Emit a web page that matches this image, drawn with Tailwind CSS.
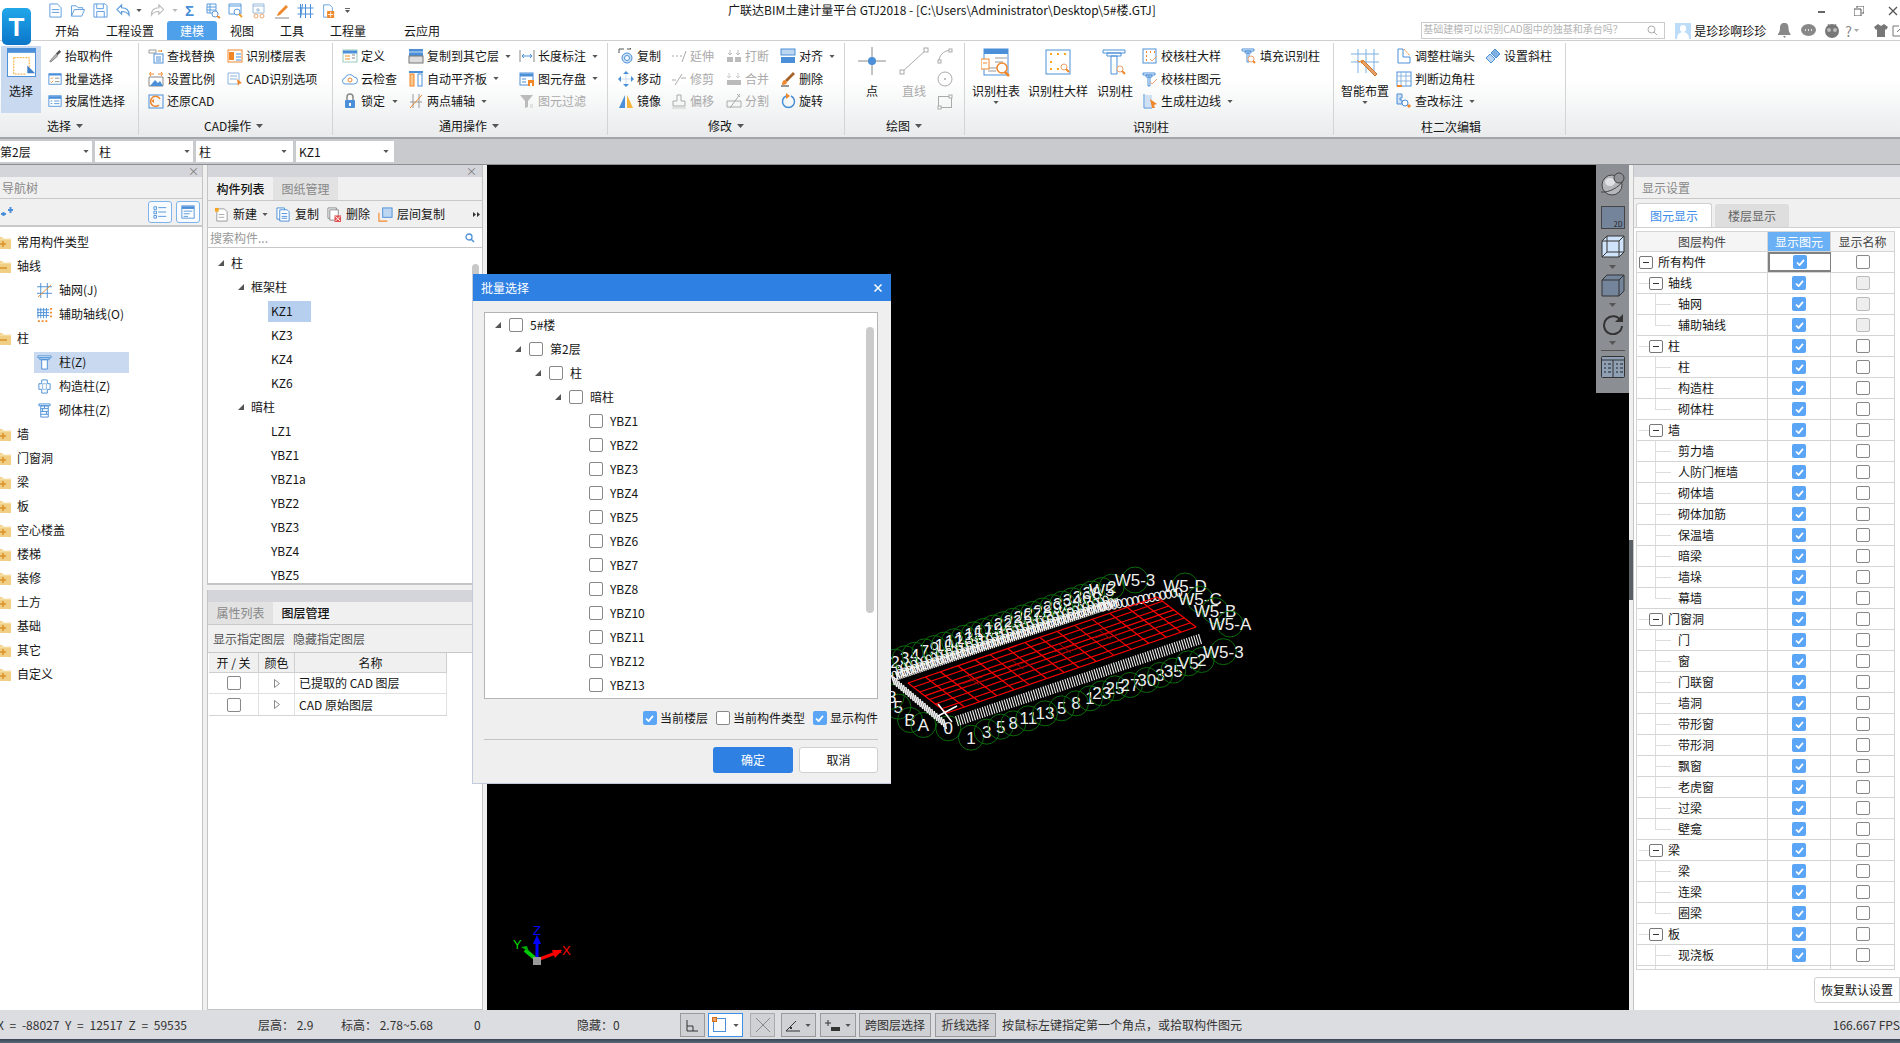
<!DOCTYPE html>
<html lang="zh-CN">
<head>
<meta charset="UTF-8">
<title>广联达BIM土建计量平台 GTJ2018</title>
<script src="https://cdn.jsdelivr.net/npm/@tailwindcss/browser@4"></script>
</head>
<body class="font-['Noto_Sans_CJK_SC','Noto_Sans',sans-serif] text-[12px] text-[#151515] overflow-hidden">

<!-- icon sprite -->
<svg class="hidden">
  <symbol id="caret" viewBox="0 0 7 4"><path d="M0 0h7L3.5 4z" fill="#555"/></symbol>
  <symbol id="tri" viewBox="0 0 6 6"><path d="M6 0v6H0z" fill="#555"/></symbol>
  <symbol id="check" viewBox="0 0 10 8"><path d="M1 4l3 3 5-6" fill="none" stroke="#fff" stroke-width="2"/></symbol>
  <symbol id="folder-plus" viewBox="0 0 16 16"><path d="M0 3h7l2 2h7v10H0z" fill="#f0cf85"/><path d="M0 5h16" stroke="#fae7b8"/><path d="M5 10h6M8 7v6" stroke="#d9932a" stroke-width="1.5"/></symbol>
  <symbol id="folder-minus" viewBox="0 0 16 16"><path d="M0 3h7l2 2h7v10H0z" fill="#f0cf85"/><path d="M0 5h16" stroke="#fae7b8"/><path d="M5 10h7" stroke="#d9932a" stroke-width="1.5"/></symbol>
  <!-- quick access -->
  <symbol id="q-new" viewBox="0 0 16 16"><path d="M2 1h8l4 4v10H2z" fill="#fff" stroke="#5a9bdc"/><path d="M4 7h8M4 10h8" stroke="#5a9bdc"/></symbol>
  <symbol id="q-open" viewBox="0 0 16 16"><path d="M1 14V3h5l2 2h5v2M1 14l3-7h11l-3 7z" fill="none" stroke="#5a9bdc"/></symbol>
  <symbol id="q-save" viewBox="0 0 16 16"><path d="M1 1h12l2 2v12H1z" fill="none" stroke="#5a9bdc"/><path d="M4 1v5h7V1M4 15V9h8v6" fill="none" stroke="#5a9bdc"/></symbol>
  <symbol id="q-undo" viewBox="0 0 16 16"><path d="M6 2L1 7l5 5V9c4 0 6 1 8 4 0-6-3-8-8-8z" fill="none" stroke="#5a9bdc" stroke-width="1.2"/></symbol>
  <symbol id="q-redo" viewBox="0 0 16 16"><path d="M10 2l5 5-5 5V9c-4 0-6 1-8 4 0-6 3-8 8-8z" fill="none" stroke="#bbb" stroke-width="1.2"/></symbol>
  <symbol id="q-doc1" viewBox="0 0 16 16"><path d="M2 1h9v9H2zM2 4h9M2 7h9M5 1v9" fill="none" stroke="#5a9bdc"/><circle cx="10" cy="11" r="3" fill="#fff" stroke="#5a9bdc"/><path d="M12 13l3 2" stroke="#f0872a" stroke-width="2"/></symbol>
  <symbol id="q-doc2" viewBox="0 0 16 16"><path d="M1 1h12v10H1zM1 3h12" fill="none" stroke="#5a9bdc"/><circle cx="9" cy="9" r="3" fill="#fff" stroke="#5a9bdc"/><path d="M11 11l3 3" stroke="#f0a02a" stroke-width="2"/></symbol>
  <symbol id="q-doc3" viewBox="0 0 16 16"><path d="M2 1h11v9H2zM2 3h11M7 5v4M5 7h4" fill="none" stroke="#9abbdc"/><circle cx="5" cy="13" r="2" fill="none" stroke="#f0a66a"/><circle cx="11" cy="13" r="2" fill="none" stroke="#f0a66a"/></symbol>
  <symbol id="q-pen" viewBox="0 0 16 16"><path d="M4 10l8-8 2 2-8 8-3 1z" fill="#f0872a"/><path d="M1 15h14" stroke="#888"/></symbol>
  <symbol id="q-grid" viewBox="0 0 16 16"><path d="M3 1v14M8 1v14M13 1v14M0 5h16M0 11h16M5 1L3 15" fill="none" stroke="#4a8fd8"/></symbol>
  <symbol id="q-add" viewBox="0 0 16 16"><path d="M3 1h7l3 3v5M3 1v14h4" fill="none" stroke="#5a9bdc"/><rect x="7" y="8" width="8" height="8" fill="#f0872a"/><path d="M11 9v6M8 12h6" stroke="#fff"/></symbol>
  <!-- ribbon small -->
  <symbol id="r-pick" viewBox="0 0 16 16"><path d="M2 14l7-8 2 2-8 7z" fill="#bbb" stroke="#777"/><path d="M9 5l4-4 2 2-4 4z" fill="#555"/></symbol>
  <symbol id="r-batch" viewBox="0 0 16 16"><rect x="1" y="2" width="14" height="12" fill="#fff" stroke="#4a8fd8"/><path d="M1 3h14" stroke="#4a8fd8" stroke-width="2"/><path d="M3 7l1 1 2-2M3 11l1 1 2-2" fill="none" stroke="#f0872a"/><path d="M8 7h5M8 11h5" stroke="#888"/></symbol>
  <symbol id="r-attr" viewBox="0 0 16 16"><rect x="1" y="2" width="14" height="12" fill="#fff" stroke="#4a8fd8"/><path d="M1 4h14" stroke="#4a8fd8" stroke-width="3"/><path d="M3 8h2M3 11h2M7 8h6M7 11h6" stroke="#4a8fd8"/></symbol>
  <symbol id="r-find" viewBox="0 0 16 16"><path d="M1 2h7v3H1z" fill="none" stroke="#999"/><path d="M10 3h4l-1-1M14 3l-1 1" fill="none" stroke="#f0872a"/><rect x="6" y="6" width="9" height="9" fill="none" stroke="#4a8fd8"/><path d="M8 9h5M8 11h5M8 13h5" stroke="#4a8fd8"/></symbol>
  <symbol id="r-floor" viewBox="0 0 16 16"><rect x="1" y="2" width="14" height="12" fill="#fff" stroke="#f0872a"/><rect x="2" y="4" width="5" height="8" fill="#f0872a"/><path d="M9 6h5M9 9h5M9 12h5" stroke="#4a8fd8"/></symbol>
  <symbol id="r-scale" viewBox="0 0 16 16"><path d="M1 6h14V15H1z" fill="#fff" stroke="#888"/><path d="M2 15l5-6 3 3 2-2 3 5z" fill="#4a8fd8"/><path d="M2 3h4M10 3h4M3 1L1.5 3 3 5M13 1l1.5 2L13 5" fill="none" stroke="#f0872a"/></symbol>
  <symbol id="r-cadopt" viewBox="0 0 16 16"><path d="M1 2h11v11H1z" fill="#fff" stroke="#8ab4dc"/><path d="M3 5h7M3 8h7" stroke="#8ab4dc"/><path d="M10 8l5 4-3 1-1 2z" fill="#f0872a"/></symbol>
  <symbol id="r-restore" viewBox="0 0 16 16"><rect x="1" y="2" width="14" height="13" fill="none" stroke="#4a8fd8"/><path d="M12 6a5 5 0 1 0-1 6" fill="none" stroke="#f0872a" stroke-width="1.5"/><path d="M3 8l3-2v4z" fill="#f0872a"/></symbol>
  <symbol id="r-def" viewBox="0 0 16 16"><rect x="1" y="2" width="14" height="12" fill="#fff" stroke="#9cb"/><path d="M1 4h14" stroke="#4a8fd8" stroke-width="3"/><path d="M3 7h5v2H3zM3 10h5v2H3z" fill="#f7c68b"/><path d="M10 7h3M10 10h3" stroke="#888"/></symbol>
  <symbol id="r-cloud" viewBox="0 0 16 16"><path d="M4 13a3 3 0 0 1-1-6 5 5 0 0 1 9-1 3.500 3.500 0 0 1 0 7z" fill="#fff" stroke="#5a9bdc"/><circle cx="8" cy="9" r="2" fill="none" stroke="#f0872a"/></symbol>
  <symbol id="r-lock" viewBox="0 0 16 16"><path d="M5 7V4a3 3 0 0 1 6 0v3" fill="none" stroke="#888" stroke-width="1.5"/><rect x="3" y="7" width="10" height="8" rx="1" fill="#4a8fd8"/><rect x="7" y="10" width="2" height="3" fill="#fff"/></symbol>
  <symbol id="r-cfloor" viewBox="0 0 16 16"><rect x="1" y="1" width="14" height="7" fill="#4a8fd8"/><rect x="1" y="8" width="14" height="7" fill="#ddd" stroke="#777"/><path d="M1 4h14" stroke="#cde"/></symbol>
  <symbol id="r-slab" viewBox="0 0 16 16"><path d="M1 1h14" stroke="#4a8fd8" stroke-width="2"/><rect x="2" y="3" width="4" height="12" fill="#f7c68b" stroke="#f0872a"/><rect x="10" y="3" width="4" height="12" fill="#fff" stroke="#4a8fd8"/></symbol>
  <symbol id="r-two" viewBox="0 0 16 16"><path d="M2 9h12M5 1v14M11 1v14" stroke="#999" fill="none"/><path d="M2 15L14 2" stroke="#f0872a"/></symbol>
  <symbol id="r-len" viewBox="0 0 16 16"><path d="M1 2v12M15 2v12" stroke="#888"/><path d="M3 8h10M5 6L3 8l2 2M11 6l2 2-2 2" fill="none" stroke="#4a8fd8"/></symbol>
  <symbol id="r-store" viewBox="0 0 16 16"><rect x="1" y="2" width="13" height="12" fill="#fff" stroke="#4a8fd8"/><path d="M1 4h13" stroke="#4a8fd8" stroke-width="3"/><path d="M3 8h4M3 11h4" stroke="#4a8fd8"/><rect x="9" y="9" width="6" height="6" fill="#f0872a"/><rect x="11" y="12" width="2" height="3" fill="#fff"/></symbol>
  <symbol id="r-filter" viewBox="0 0 16 16"><path d="M1 2h13L9 8v6l-3 1V8z" fill="#bbb"/><path d="M11 12h3M11 14h3" stroke="#ccc"/></symbol>
  <symbol id="r-copy" viewBox="0 0 16 16"><path d="M1 5V1h5" fill="none" stroke="#555"/><path d="M9 1h4l-1-1" fill="none" stroke="#555"/><circle cx="9" cy="10" r="5" fill="#cde3f7" stroke="#4a8fd8"/><circle cx="9" cy="10" r="2.500" fill="#fff" stroke="#4a8fd8"/></symbol>
  <symbol id="r-move" viewBox="0 0 16 16"><path d="M8 1v14M1 8h14" stroke="#cde" /><path d="M8 0l3 3H5zM8 16l-3-3h6zM0 8l3-3v6zM16 8l-3 3V5z" fill="#4a8fd8"/></symbol>
  <symbol id="r-mirror" viewBox="0 0 16 16"><path d="M7 2v13H1z" fill="#4a8fd8"/><path d="M9 2v13h6z" fill="#f5b53c"/></symbol>
  <symbol id="r-ext" viewBox="0 0 16 16"><path d="M1 8h2M5 8h2M9 8h2" stroke="#aaa"/><path d="M11 14L15 3" stroke="#aaa"/></symbol>
  <symbol id="r-trim" viewBox="0 0 16 16"><path d="M1 9h4M10 7h5M4 14L11 3" stroke="#aaa" fill="none"/></symbol>
  <symbol id="r-offset" viewBox="0 0 16 16"><path d="M6 2h4v6h4v5H2V8h4z" fill="none" stroke="#aaa"/><path d="M1 15h14" stroke="#ccc"/></symbol>
  <symbol id="r-break" viewBox="0 0 16 16"><path d="M1 9h6v5H1zM9 9h6v5H9z" fill="#bbb"/><path d="M4 2v5M2 5l2 2 2-2M12 2v5M10 5l2 2 2-2" fill="none" stroke="#bbb"/></symbol>
  <symbol id="r-merge" viewBox="0 0 16 16"><path d="M1 9h14v5H1z" fill="#bbb"/><path d="M3 2v5M12 2v5M1 5l2 2 2-2M10 5l2 2 2-2" fill="none" stroke="#ccc"/></symbol>
  <symbol id="r-split" viewBox="0 0 16 16"><path d="M1 8h14v6H1z" fill="none" stroke="#aaa"/><path d="M4 15L14 1M11 1l3 3" stroke="#aaa" fill="none"/></symbol>
  <symbol id="r-align" viewBox="0 0 16 16"><rect x="1" y="1" width="14" height="6" fill="#bcd6f2" stroke="#4a8fd8"/><rect x="1" y="9" width="14" height="6" fill="#4a8fd8"/></symbol>
  <symbol id="r-del" viewBox="0 0 16 16"><path d="M5 9l8-8 2 2-8 8z" fill="#a5622a"/><path d="M2 14c0-3 1-5 3-5l2 2c0 2-2 3-5 3z" fill="#f0872a"/><path d="M1 15h8" stroke="#333"/></symbol>
  <symbol id="r-rot" viewBox="0 0 16 16"><path d="M11 3a6 6 0 1 1-5 0" fill="none" stroke="#4a8fd8" stroke-width="1.5"/><path d="M6 0l4 3-4 3z" fill="#f0872a"/></symbol>
  <symbol id="r-chk1" viewBox="0 0 16 16"><rect x="1" y="1" width="13" height="14" fill="#fff" stroke="#4a8fd8"/><path d="M4 4h1M8 4h1M12 4h1M4 8h1M4 12h1" stroke="#f0872a" stroke-width="2"/><path d="M8 11l2 2 5-5" fill="none" stroke="#f2a06a"/></symbol>
  <symbol id="r-chk2" viewBox="0 0 16 16"><path d="M1 2h12v2H1zM4 4h6v2H4zM6 6h2v9H6z" fill="none" stroke="#4a8fd8"/><path d="M8 11l2 2 5-5" fill="none" stroke="#f2a06a"/></symbol>
  <symbol id="r-edge" viewBox="0 0 16 16"><path d="M2 1v14M2 15h8" stroke="#4a8fd8"/><rect x="3" y="2" width="7" height="12" fill="#cfe0f5"/><path d="M8 6l7 5-3 1 1 3-3 0z" fill="#f0872a"/></symbol>
  <symbol id="r-fill" viewBox="0 0 16 16"><path d="M1 1h12v2H1zM4 3h6v2H4zM6 5h2v9H6z" fill="none" stroke="#4a8fd8"/><circle cx="10" cy="11" r="3" fill="#fff" stroke="#f2a06a"/><path d="M12 13l2 2" stroke="#f0872a" stroke-width="2"/></symbol>
  <symbol id="r-adj" viewBox="0 0 16 16"><path d="M2 1h5v8h7v6H2z" fill="none" stroke="#4a8fd8"/><path d="M8 1l6 7" stroke="#f0872a" stroke-dasharray="2 1"/></symbol>
  <symbol id="r-corner" viewBox="0 0 16 16"><rect x="1" y="1" width="14" height="14" fill="#fff" stroke="#4a8fd8"/><path d="M1 5h14M1 10h14M5 1v14M10 1v14" stroke="#8ab4dc"/><path d="M1 15h5" stroke="#f0872a" stroke-width="2"/></symbol>
  <symbol id="r-mark" viewBox="0 0 16 16"><path d="M1 1h5v4H4v2h2v4H1z" fill="#cfe0f5" stroke="#4a8fd8"/><circle cx="9" cy="10" r="3" fill="#fff" stroke="#4a8fd8"/><path d="M12 12l2 2" stroke="#f0872a" stroke-width="3"/></symbol>
  <symbol id="r-slant" viewBox="0 0 16 16"><path d="M1 10l5 5 4-4-5-5z" fill="#bcd6f2" stroke="#4a8fd8"/><path d="M6 5l4-4 5 5-4 4z" fill="#7fb0e2" stroke="#4a8fd8"/></symbol>
  <!-- ribbon large -->
  <symbol id="b-select" viewBox="0 0 30 30"><rect x="0.500" y="0.500" width="29" height="29" fill="#fff" stroke="#4a8fd8"/><rect x="0" y="0" width="30" height="5" fill="#4a8fd8"/><path d="M7 10h16v17" fill="none" stroke="#f5a623" stroke-dasharray="2 1"/><path d="M7 10v17h12" fill="none" stroke="#f5a623" stroke-dasharray="2 1"/><path d="M21 18l8 8h-8z" fill="#3f7fc8"/></symbol>
  <symbol id="b-point" viewBox="0 0 30 30"><path d="M15 1v28M1 15h28" stroke="#888"/><circle cx="15" cy="15" r="4" fill="#4a8fd8"/></symbol>
  <symbol id="b-line" viewBox="0 0 30 30"><path d="M3 26L27 4" stroke="#aaa"/><rect x="1" y="24" width="4" height="4" fill="#fff" stroke="#aaa"/><rect x="25" y="2" width="4" height="4" fill="#fff" stroke="#aaa"/></symbol>
  <symbol id="b-table" viewBox="0 0 30 30"><rect x="3" y="1" width="24" height="26" fill="#fff" stroke="#4a8fd8"/><rect x="3" y="1" width="24" height="5" fill="#4a8fd8"/><path d="M14 10h12M14 14h8M7 20h10M7 23h8" stroke="#999"/><rect x="0" y="11" width="8" height="10" fill="#fff" stroke="#f0872a"/><path d="M2 15h4" stroke="#f0872a"/><circle cx="21" cy="20" r="5" fill="#fff" stroke="#f0872a" stroke-width="1.500"/><path d="M24 24l4 4" stroke="#f0872a" stroke-width="2.500"/></symbol>
  <symbol id="b-detail" viewBox="0 0 30 30"><rect x="3" y="2" width="24" height="24" fill="#fff" stroke="#4a8fd8"/><path d="M7 6h2M14 6h2M21 6h2M7 14h2M7 21h2M14 21h2" stroke="#f5a623" stroke-width="2"/><circle cx="21" cy="19" r="3" fill="#fff" stroke="#f2a06a"/><path d="M23 21l3 3" stroke="#f0872a" stroke-width="2"/></symbol>
  <symbol id="b-col" viewBox="0 0 30 30"><path d="M3 2h22v3H3zM7 5h14v3H7zM11 8h6v18h-6z" fill="#fff" stroke="#4a8fd8"/><circle cx="20" cy="21" r="3" fill="#fff" stroke="#f2a06a"/><path d="M22 23l3 3" stroke="#f0872a" stroke-width="2"/></symbol>
  <symbol id="b-smart" viewBox="0 0 30 30"><path d="M8 1v24M16 1v24M24 1v24M1 6h28M1 14h28" stroke="#7fb0e2"/><path d="M13 12l14 14-2 2L11 14z" fill="#e6a26a" stroke="#c9782e"/><path d="M7 12l2 2 4-2-1 4" fill="none" stroke="#f0872a"/></symbol>
  <symbol id="b-arc" viewBox="0 0 16 16"><path d="M2 14c0-7 4-11 12-12" fill="none" stroke="#aaa"/><rect x="1" y="12" width="3" height="3" fill="#fff" stroke="#aaa"/><rect x="12" y="1" width="3" height="3" fill="#fff" stroke="#aaa"/></symbol>
  <symbol id="b-circle" viewBox="0 0 16 16"><circle cx="8" cy="8" r="7" fill="none" stroke="#aaa"/><circle cx="8" cy="8" r="1" fill="#aaa"/></symbol>
  <symbol id="b-rect" viewBox="0 0 16 16"><rect x="1.500" y="2.500" width="13" height="11" fill="none" stroke="#aaa"/><rect x="12" y="1" width="3" height="3" fill="#fff" stroke="#aaa"/><rect x="1" y="12" width="3" height="3" fill="#fff" stroke="#aaa"/></symbol>
  <!-- side panel -->
  <symbol id="n-grid" viewBox="0 0 16 16"><path d="M4 0v16M11 0v16M0 4h16M0 11h16" stroke="#4a8fd8"/><path d="M1 15L15 2" stroke="#f0872a"/></symbol>
  <symbol id="n-aux" viewBox="0 0 16 16"><path d="M1 1v11M4 1v11M7 1v11M10 1v11M0 3h13M0 6h13M0 9h13" stroke="#4a8fd8"/><path d="M14 2h2M14 6h2M14 10h2M2 14v2M6 14v2M10 14v2" stroke="#f0872a" stroke-width="2"/></symbol>
  <symbol id="n-col" viewBox="0 0 16 16"><path d="M1 1h14v2H1zM3 3h10v2H3zM5 5h6v10H5z" fill="#fff" stroke="#4a8fd8"/></symbol>
  <symbol id="n-gz" viewBox="0 0 16 16"><path d="M5 1h6v4h3v6h-3v4H5v-4H2V5h3z" fill="#fff" stroke="#4a8fd8"/><path d="M6 5h4v6H6z" fill="none" stroke="#8ab4dc"/></symbol>
  <symbol id="n-mas" viewBox="0 0 16 16"><path d="M2 1h12v2H2zM4 3h8v12H4z" fill="#fff" stroke="#4a8fd8"/><path d="M4 6h8M4 9h8M4 12h8M8 3v3M6 6v3M10 9v3" stroke="#4a8fd8"/></symbol>
  <symbol id="p-new" viewBox="0 0 16 16"><path d="M3 2h8l3 3v10H3z" fill="#fff" stroke="#999"/><path d="M1 1h4v4H1z" fill="#f5a623"/><path d="M5 8h6M5 11h6" stroke="#aaa"/></symbol>
  <symbol id="p-copy" viewBox="0 0 16 16"><path d="M1 1h8v12H1z" fill="#fff" stroke="#4a8fd8"/><path d="M4 3h8l2 2v10H4z" fill="#fff" stroke="#4a8fd8"/><path d="M6 7h6M6 10h6M6 12h6" stroke="#4a8fd8"/></symbol>
  <symbol id="p-del" viewBox="0 0 16 16"><path d="M1 1h9v11H1z" fill="#fff" stroke="#888"/><path d="M3 3h9v11H3z" fill="#fff" stroke="#888"/><rect x="8" y="9" width="7" height="7" fill="#e05050"/><path d="M9 10l5 5M14 10l-5 5" stroke="#fff"/></symbol>
  <symbol id="p-fcopy" viewBox="0 0 16 16"><path d="M1 6v9h9" fill="none" stroke="#f0872a" stroke-width="1.200"/><rect x="5" y="1" width="10" height="10" fill="#bcd6f2" stroke="#4a8fd8"/></symbol>
  <symbol id="p-list" viewBox="0 0 16 16"><path d="M1 2h3v3H1zM1 7h3v3H1zM1 12h3v3H1z" fill="none" stroke="#4a8fd8"/><path d="M6 3h9M6 8h9M6 13h9" stroke="#4a8fd8"/></symbol>
  <symbol id="p-win" viewBox="0 0 16 16"><rect x="1" y="1" width="14" height="14" fill="#fff" stroke="#4a8fd8"/><path d="M1 3h14" stroke="#4a8fd8" stroke-width="3"/><path d="M3 7h10M3 10h7M3 13h5" stroke="#4a8fd8"/></symbol>
</svg>

<div class="relative w-[1900px] h-[1043px] bg-[#f0f0f0] flex flex-col overflow-hidden">

  <!-- logo lies over title bar and ribbon -->
  <div class="absolute left-[2px] top-[8px] w-[29px] h-[37px] rounded-[5px] bg-gradient-to-b from-[#21a7ea] to-[#0b76c9] flex items-center justify-center text-white text-[26px] font-bold leading-none z-10 font-['Liberation_Sans',sans-serif]">T</div>

  <!-- title bar -->
  <header class="h-[41px] bg-white border-b border-[#cfcfcf] shrink-0 flex flex-col">
    <div class="relative h-[21px] flex items-center pl-[48px]">
      <div class="flex items-center gap-[7px]">
        <svg class="w-[15px] h-[15px]"><use href="#q-new"/></svg>
        <svg class="w-[16px] h-[15px]"><use href="#q-open"/></svg>
        <svg class="w-[15px] h-[15px]"><use href="#q-save"/></svg>
        <svg class="w-[17px] h-[15px]"><use href="#q-undo"/></svg>
        <svg class="w-[6px] h-[3px] -ml-[3px]"><use href="#caret"/></svg>
        <svg class="w-[16px] h-[15px]"><use href="#q-redo"/></svg>
        <svg class="w-[6px] h-[3px] opacity-40"><use href="#caret"/></svg>
        <span class="text-[#4a8fd8] text-[15px] font-bold leading-none w-[12px] font-['Liberation_Sans',sans-serif]">Σ</span>
        <svg class="w-[16px] h-[16px] ml-[1px]"><use href="#q-doc1"/></svg>
        <svg class="w-[16px] h-[16px]"><use href="#q-doc2"/></svg>
        <svg class="w-[16px] h-[16px]"><use href="#q-doc3"/></svg>
        <svg class="w-[16px] h-[16px]"><use href="#q-pen"/></svg>
        <svg class="w-[17px] h-[16px]"><use href="#q-grid"/></svg>
        <svg class="w-[14px] h-[16px]"><use href="#q-add"/></svg>
        <span class="w-[5px] ml-[3px] flex flex-col gap-[1px] items-center"><span class="w-[5px] h-[1px] bg-[#666]"></span><svg class="w-[5px] h-[3px]"><use href="#caret"/></svg></span>
      </div>
      <div class="absolute left-[728px] top-[2px] leading-[16px] text-[12px]">广联达BIM土建计量平台 GTJ2018 - [C:\Users\Administrator\Desktop\5#楼.GTJ]</div>
      <div class="ml-auto flex items-center text-[#555]">
        <span class="w-[7px] h-[2px] bg-[#666] mr-[29px] mt-[3px]"></span>
        <svg class="w-[10px] h-[10px] mr-[24px]" viewBox="0 0 10 10"><path d="M3 2V0h7v7H8M0 3h7v7H0z" fill="none" stroke="#555"/></svg>
        <svg class="w-[10px] h-[10px] mr-[2px]" viewBox="0 0 10 10"><path d="M1 1l8 8M9 1l-8 8" stroke="#555" stroke-width="1.300"/></svg>
      </div>
    </div>
    <div class="h-[19px] flex items-stretch text-[12px]">
      <nav class="flex items-center pl-[55px]">
        <span>开始</span>
        <span class="ml-[27px]">工程设置</span>
        <span class="ml-[13px] w-[50px] h-[19px] bg-[#4fa0ea] text-white rounded-t-[3px] flex items-center justify-center">建模</span>
        <span class="ml-[13px]">视图</span>
        <span class="ml-[26px]">工具</span>
        <span class="ml-[26px]">工程量</span>
        <span class="ml-[38px]">云应用</span>
      </nav>
      <div class="ml-auto flex items-center mr-[4px]">
        <div class="w-[244px] h-[17px] border border-[#ccc] flex items-start pl-[1px] text-[10px] leading-[11px] text-[#b5b5b5] overflow-hidden whitespace-nowrap"><span class="w-[224px] shrink-0">基础建模可以识别CAD图中的独基和承台吗？</span>
          <svg class="w-[11px] h-[11px] mt-[2px] shrink-0" viewBox="0 0 11 11"><circle cx="4.500" cy="4.500" r="3.500" fill="none" stroke="#aaa"/><path d="M7 7l3 3" stroke="#aaa"/></svg>
        </div>
        <div class="w-[16px] h-[16px] ml-[10px] bg-[#bcdcf8] relative overflow-hidden"><span class="absolute left-[5px] top-[2px] w-[6px] h-[7px] rounded-full bg-white"></span><span class="absolute left-[2px] top-[9px] w-[12px] h-[8px] rounded-t-full bg-white"></span></div>
        <span class="ml-[3px] w-[72px]">是珍珍啊珍珍</span>
        <svg class="w-[13px] h-[15px] ml-[12px]" viewBox="0 0 13 15"><path d="M6.500 0c3 0 4 2 4 5s1 5 2 6v1H0v-1c1-1 2-3 2-6s1-5 4.500-5zM5 13h3l-1.500 2z" fill="#888"/></svg>
        <svg class="w-[15px] h-[13px] ml-[10px]" viewBox="0 0 15 13"><ellipse cx="7.500" cy="6" rx="7.500" ry="6" fill="#888"/><path d="M4 6h1M7 6h1M10 6h1" stroke="#fff" stroke-width="1.500"/></svg>
        <svg class="w-[16px] h-[15px] ml-[8px]" viewBox="0 0 16 15"><circle cx="8" cy="8" r="7" fill="#777"/><circle cx="5" cy="7" r="2" fill="#bbb"/><circle cx="11" cy="7" r="2" fill="#bbb"/><path d="M4 1l1 2M12 1l-1 2" stroke="#777"/></svg>
        <span class="ml-[5px] text-[#888] text-[14px] leading-none">?</span>
        <svg class="w-[5px] h-[3px] ml-[2px] opacity-50"><use href="#caret"/></svg>
        <svg class="w-[14px] h-[13px] ml-[15px]" viewBox="0 0 14 13"><path d="M4 0L0 3l2 3 1-1v8h8V5l1 1 2-3-4-3-3 2z" fill="#777"/></svg>
        <svg class="w-[12px] h-[12px] ml-[4px] -mr-[8px]" viewBox="0 0 12 12"><path d="M11 5v6H1V1h6M5 7l6-6" fill="none" stroke="#777"/></svg>
      </div>
    </div>
  </header>

  <!-- ribbon -->
  <div class="h-[98px] shrink-0 flex bg-gradient-to-b from-white from-40% to-[#e9ebec] border-b-2 border-[#a3a5a8]">
    <section class="w-[139px] my-[2px] border-r border-[#d2d4d6] flex flex-col">
      <div class="h-[74px] flex pt-[2px]">
        <div class="ml-[1px] w-[40px] h-[67px] mt-[1px] bg-[#c9daf0] flex flex-col items-center pt-[2px] gap-[2px]"><svg class="w-[29px] h-[29px]"><use href="#b-select"/></svg><span class="mt-[3px]">选择</span></div>
        <div class="ml-[7px] flex flex-col">
          <div class="h-[22.500px] flex items-center gap-[3px]"><svg class="w-[14px] h-[14px]"><use href="#r-pick"/></svg>抬取构件</div>
          <div class="h-[22.500px] flex items-center gap-[3px]"><svg class="w-[14px] h-[14px]"><use href="#r-batch"/></svg>批量选择</div>
          <div class="h-[22.500px] flex items-center gap-[3px]"><svg class="w-[14px] h-[14px]"><use href="#r-attr"/></svg>按属性选择</div>
        </div>
      </div>
      <div class="h-[17px] flex items-center pl-[47px]">选择<svg class="w-[7px] h-[4px] ml-[5px]"><use href="#caret"/></svg></div>
    </section>
    <section class="w-[194px] my-[2px] border-r border-[#d2d4d6] flex flex-col">
      <div class="h-[74px] flex pt-[2px] pl-[9px]">
        <div class="w-[79px] flex flex-col">
          <div class="h-[22.500px] flex items-center gap-[3px]"><svg class="w-4 h-4"><use href="#r-find"/></svg>查找替换</div>
          <div class="h-[22.500px] flex items-center gap-[3px]"><svg class="w-4 h-4"><use href="#r-scale"/></svg>设置比例</div>
          <div class="h-[22.500px] flex items-center gap-[3px]"><svg class="w-4 h-4"><use href="#r-restore"/></svg>还原CAD</div>
        </div>
        <div class="flex flex-col">
          <div class="h-[22.500px] flex items-center gap-[3px]"><svg class="w-4 h-4"><use href="#r-floor"/></svg>识别楼层表</div>
          <div class="h-[22.500px] flex items-center gap-[3px]"><svg class="w-4 h-4"><use href="#r-cadopt"/></svg>CAD识别选项</div>
        </div>
      </div>
      <div class="h-[17px] flex items-center pl-[65px]">CAD操作<svg class="w-[7px] h-[4px] ml-[5px]"><use href="#caret"/></svg></div>
    </section>
    <section class="w-[275px] my-[2px] border-r border-[#d2d4d6] flex flex-col">
      <div class="h-[74px] flex pt-[2px] pl-[9px]">
        <div class="w-[66px] flex flex-col">
          <div class="h-[22.500px] flex items-center gap-[3px]"><svg class="w-4 h-4"><use href="#r-def"/></svg>定义</div>
          <div class="h-[22.500px] flex items-center gap-[3px]"><svg class="w-4 h-4"><use href="#r-cloud"/></svg>云检查</div>
          <div class="h-[22.500px] flex items-center gap-[3px]"><svg class="w-4 h-4"><use href="#r-lock"/></svg>锁定<svg class="w-[6px] h-[3px] ml-[4px]"><use href="#caret"/></svg></div>
        </div>
        <div class="w-[111px] flex flex-col">
          <div class="h-[22.500px] flex items-center gap-[3px]"><svg class="w-4 h-4"><use href="#r-cfloor"/></svg>复制到其它层<svg class="w-[6px] h-[3px] ml-[3px]"><use href="#caret"/></svg></div>
          <div class="h-[22.500px] flex items-center gap-[3px]"><svg class="w-4 h-4"><use href="#r-slab"/></svg>自动平齐板<svg class="w-[6px] h-[3px] ml-[3px]"><use href="#caret"/></svg></div>
          <div class="h-[22.500px] flex items-center gap-[3px]"><svg class="w-4 h-4"><use href="#r-two"/></svg>两点辅轴<svg class="w-[6px] h-[3px] ml-[3px]"><use href="#caret"/></svg></div>
        </div>
        <div class="flex flex-col">
          <div class="h-[22.500px] flex items-center gap-[3px]"><svg class="w-4 h-4"><use href="#r-len"/></svg>长度标注<svg class="w-[6px] h-[3px] ml-[3px]"><use href="#caret"/></svg></div>
          <div class="h-[22.500px] flex items-center gap-[3px]"><svg class="w-4 h-4"><use href="#r-store"/></svg>图元存盘<svg class="w-[6px] h-[3px] ml-[3px]"><use href="#caret"/></svg></div>
          <div class="h-[22.500px] flex items-center gap-[3px] text-[#aaa]"><svg class="w-4 h-4"><use href="#r-filter"/></svg>图元过滤</div>
        </div>
      </div>
      <div class="h-[17px] flex items-center pl-[106px]">通用操作<svg class="w-[7px] h-[4px] ml-[5px]"><use href="#caret"/></svg></div>
    </section>
    <section class="w-[237px] my-[2px] border-r border-[#d2d4d6] flex flex-col">
      <div class="h-[74px] flex pt-[2px] pl-[10px]">
        <div class="w-[53px] flex flex-col">
          <div class="h-[22.500px] flex items-center gap-[3px]"><svg class="w-4 h-4"><use href="#r-copy"/></svg>复制</div>
          <div class="h-[22.500px] flex items-center gap-[3px]"><svg class="w-4 h-4"><use href="#r-move"/></svg>移动</div>
          <div class="h-[22.500px] flex items-center gap-[3px]"><svg class="w-4 h-4"><use href="#r-mirror"/></svg>镜像</div>
        </div>
        <div class="w-[55px] flex flex-col text-[#aaa]">
          <div class="h-[22.500px] flex items-center gap-[3px]"><svg class="w-4 h-4"><use href="#r-ext"/></svg>延伸</div>
          <div class="h-[22.500px] flex items-center gap-[3px]"><svg class="w-4 h-4"><use href="#r-trim"/></svg>修剪</div>
          <div class="h-[22.500px] flex items-center gap-[3px]"><svg class="w-4 h-4"><use href="#r-offset"/></svg>偏移</div>
        </div>
        <div class="w-[54px] flex flex-col text-[#aaa]">
          <div class="h-[22.500px] flex items-center gap-[3px]"><svg class="w-4 h-4"><use href="#r-break"/></svg>打断</div>
          <div class="h-[22.500px] flex items-center gap-[3px]"><svg class="w-4 h-4"><use href="#r-merge"/></svg>合并</div>
          <div class="h-[22.500px] flex items-center gap-[3px]"><svg class="w-4 h-4"><use href="#r-split"/></svg>分割</div>
        </div>
        <div class="flex flex-col">
          <div class="h-[22.500px] flex items-center gap-[3px]"><svg class="w-4 h-4"><use href="#r-align"/></svg>对齐<svg class="w-[6px] h-[3px] ml-[3px]"><use href="#caret"/></svg></div>
          <div class="h-[22.500px] flex items-center gap-[3px]"><svg class="w-4 h-4"><use href="#r-del"/></svg>删除</div>
          <div class="h-[22.500px] flex items-center gap-[3px]"><svg class="w-4 h-4"><use href="#r-rot"/></svg>旋转</div>
        </div>
      </div>
      <div class="h-[17px] flex items-center pl-[100px]">修改<svg class="w-[7px] h-[4px] ml-[5px]"><use href="#caret"/></svg></div>
    </section>
    <section class="w-[120px] my-[2px] border-r border-[#d2d4d6] flex flex-col">
      <div class="h-[74px] flex pt-[3px] pl-[11px]">
        <div class="w-[32px] flex flex-col items-center"><svg class="w-[30px] h-[30px]"><use href="#b-point"/></svg><span class="mt-[6px]">点</span></div>
        <div class="ml-[11px] w-[30px] flex flex-col items-center text-[#aaa]"><svg class="w-[30px] h-[30px]"><use href="#b-line"/></svg><span class="mt-[6px]">直线</span></div>
        <div class="ml-[8px] flex flex-col gap-[7px] pt-[2px]"><svg class="w-4 h-4"><use href="#b-arc"/></svg><svg class="w-4 h-4"><use href="#b-circle"/></svg><svg class="w-4 h-4"><use href="#b-rect"/></svg></div>
      </div>
      <div class="h-[17px] flex items-center pl-[41px]">绘图<svg class="w-[7px] h-[4px] ml-[5px]"><use href="#caret"/></svg></div>
    </section>
    <section class="w-[369px] my-[2px] border-r border-[#d2d4d6] flex flex-col">
      <div class="h-[74px] flex pt-[5px] pl-[7px]">
        <div class="w-[48px] flex flex-col items-center"><svg class="w-[30px] h-[30px]"><use href="#b-table"/></svg><span class="mt-[4px]">识别柱表</span><svg class="w-[6px] h-[3px] mt-[1px]"><use href="#caret"/></svg></div>
        <div class="ml-[8px] w-[60px] flex flex-col items-center"><svg class="w-[30px] h-[30px]"><use href="#b-detail"/></svg><span class="mt-[4px]">识别柱大样</span></div>
        <div class="ml-[9px] w-[36px] flex flex-col items-center"><svg class="w-[30px] h-[30px]"><use href="#b-col"/></svg><span class="mt-[4px]">识别柱</span></div>
        <div class="ml-[9px] w-[99px] flex flex-col -mt-[3px]">
          <div class="h-[22.500px] flex items-center gap-[3px]"><svg class="w-4 h-4"><use href="#r-chk1"/></svg>校核柱大样</div>
          <div class="h-[22.500px] flex items-center gap-[3px]"><svg class="w-4 h-4"><use href="#r-chk2"/></svg>校核柱图元</div>
          <div class="h-[22.500px] flex items-center gap-[3px]"><svg class="w-4 h-4"><use href="#r-edge"/></svg>生成柱边线<svg class="w-[6px] h-[3px] ml-[3px]"><use href="#caret"/></svg></div>
        </div>
        <div class="flex flex-col -mt-[3px]">
          <div class="h-[22.500px] flex items-center gap-[3px]"><svg class="w-4 h-4"><use href="#r-fill"/></svg>填充识别柱</div>
        </div>
      </div>
      <div class="h-[17px] flex items-center pl-[168px] pt-[3px]">识别柱</div>
    </section>
    <section class="w-[232px] my-[2px] border-r border-[#d2d4d6] flex flex-col">
      <div class="h-[74px] flex pt-[5px] pl-[7px]">
        <div class="w-[48px] flex flex-col items-center"><svg class="w-[30px] h-[30px]"><use href="#b-smart"/></svg><span class="mt-[4px]">智能布置</span><svg class="w-[6px] h-[3px] mt-[1px]"><use href="#caret"/></svg></div>
        <div class="ml-[7px] w-[89px] flex flex-col -mt-[3px]">
          <div class="h-[22.500px] flex items-center gap-[3px]"><svg class="w-4 h-4"><use href="#r-adj"/></svg>调整柱端头</div>
          <div class="h-[22.500px] flex items-center gap-[3px]"><svg class="w-4 h-4"><use href="#r-corner"/></svg>判断边角柱</div>
          <div class="h-[22.500px] flex items-center gap-[3px]"><svg class="w-4 h-4"><use href="#r-mark"/></svg>查改标注<svg class="w-[6px] h-[3px] ml-[3px]"><use href="#caret"/></svg></div>
        </div>
        <div class="flex flex-col -mt-[3px]">
          <div class="h-[22.500px] flex items-center gap-[3px]"><svg class="w-4 h-4"><use href="#r-slant"/></svg>设置斜柱</div>
        </div>
      </div>
      <div class="h-[17px] flex items-center pl-[87px] pt-[3px]">柱二次编辑</div>
    </section>
  </div>

  <!-- property combos -->
  <div class="h-[26px] shrink-0 bg-[#c8cacd] flex items-center gap-[3px] border-b border-[#8d8f92]">
    <div class="w-[92px] h-[21px] bg-white flex items-center justify-between pr-[3px]">第2层<svg class="w-[6px] h-[3px]"><use href="#caret"/></svg></div>
    <div class="w-[98px] h-[21px] bg-white flex items-center justify-between pl-[4px] pr-[3px]">柱<svg class="w-[6px] h-[3px]"><use href="#caret"/></svg></div>
    <div class="w-[97px] h-[21px] bg-white flex items-center justify-between pl-[3px] pr-[6px]">柱<svg class="w-[6px] h-[3px]"><use href="#caret"/></svg></div>
    <div class="w-[98px] h-[21px] bg-white flex items-center justify-between pl-[3px] pr-[5px]">KZ1<svg class="w-[6px] h-[3px]"><use href="#caret"/></svg></div>
  </div>

  <!-- workspace -->
  <main class="h-[845px] shrink-0 flex">

    <!-- navigation tree -->
    <aside class="w-[203px] shrink-0 bg-white border-r border-[#c4c4c4] flex flex-col">
      <div class="h-[12px] bg-[#d4d5da] flex items-center justify-end pr-[3px] text-[#777] text-[11px] leading-none">×</div>
      <div class="h-[22px] bg-[#f0f0f0] border-b border-[#c8c8c8] flex items-center pl-[2px] text-[#888]">导航树</div>
      <div class="h-[28px] bg-[#f0f0f0] border-b-2 border-[#c8c8c8] flex items-center pl-[1px]">
        <svg class="w-[13px] h-[10px]" viewBox="0 0 13 10"><path d="M0 7h5M2.500 5v4M7 3h5M9.500 0v6" stroke="#4a8fd8" stroke-width="2"/></svg>
        <div class="ml-auto mr-[2px] flex gap-[4px]">
          <span class="w-[24px] h-[22px] rounded-[3px] border border-[#7db4ec] bg-[#f7fbff] flex items-center justify-center"><svg class="w-[14px] h-[14px]"><use href="#p-list"/></svg></span>
          <span class="w-[24px] h-[22px] rounded-[3px] border border-[#7db4ec] bg-[#f7fbff] flex items-center justify-center"><svg class="w-[14px] h-[14px]"><use href="#p-win"/></svg></span>
        </div>
      </div>
      <div class="pt-[3px]">
        <div class="h-6 flex items-center"><svg class="w-4 h-4 -ml-[5px] mr-[6px]"><use href="#folder-plus"/></svg>常用构件类型</div>
        <div class="h-6 flex items-center"><svg class="w-4 h-4 -ml-[5px] mr-[6px]"><use href="#folder-minus"/></svg>轴线</div>
        <div class="h-6 flex items-center pl-[37px]"><svg class="w-[15px] h-[15px] mr-[7px]"><use href="#n-grid"/></svg>轴网(J)</div>
        <div class="h-6 flex items-center pl-[37px]"><svg class="w-[15px] h-[15px] mr-[7px]"><use href="#n-aux"/></svg>辅助轴线(O)</div>
        <div class="h-6 flex items-center"><svg class="w-4 h-4 -ml-[5px] mr-[6px]"><use href="#folder-minus"/></svg>柱</div>
        <div class="h-6 flex items-center pl-[37px] relative"><span class="absolute left-[34px] top-[2px] w-[95px] h-[21px] bg-[#c9daf0]"></span><svg class="w-[15px] h-[15px] mr-[7px] relative"><use href="#n-col"/></svg><span class="relative">柱(Z)</span></div>
        <div class="h-6 flex items-center pl-[37px]"><svg class="w-[15px] h-[15px] mr-[7px]"><use href="#n-gz"/></svg>构造柱(Z)</div>
        <div class="h-6 flex items-center pl-[37px]"><svg class="w-[15px] h-[15px] mr-[7px]"><use href="#n-mas"/></svg>砌体柱(Z)</div>
        <div class="h-6 flex items-center"><svg class="w-4 h-4 -ml-[5px] mr-[6px]"><use href="#folder-plus"/></svg>墙</div>
        <div class="h-6 flex items-center"><svg class="w-4 h-4 -ml-[5px] mr-[6px]"><use href="#folder-plus"/></svg>门窗洞</div>
        <div class="h-6 flex items-center"><svg class="w-4 h-4 -ml-[5px] mr-[6px]"><use href="#folder-plus"/></svg>梁</div>
        <div class="h-6 flex items-center"><svg class="w-4 h-4 -ml-[5px] mr-[6px]"><use href="#folder-plus"/></svg>板</div>
        <div class="h-6 flex items-center"><svg class="w-4 h-4 -ml-[5px] mr-[6px]"><use href="#folder-plus"/></svg>空心楼盖</div>
        <div class="h-6 flex items-center"><svg class="w-4 h-4 -ml-[5px] mr-[6px]"><use href="#folder-plus"/></svg>楼梯</div>
        <div class="h-6 flex items-center"><svg class="w-4 h-4 -ml-[5px] mr-[6px]"><use href="#folder-plus"/></svg>装修</div>
        <div class="h-6 flex items-center"><svg class="w-4 h-4 -ml-[5px] mr-[6px]"><use href="#folder-plus"/></svg>土方</div>
        <div class="h-6 flex items-center"><svg class="w-4 h-4 -ml-[5px] mr-[6px]"><use href="#folder-plus"/></svg>基础</div>
        <div class="h-6 flex items-center"><svg class="w-4 h-4 -ml-[5px] mr-[6px]"><use href="#folder-plus"/></svg>其它</div>
        <div class="h-6 flex items-center"><svg class="w-4 h-4 -ml-[5px] mr-[6px]"><use href="#folder-plus"/></svg>自定义</div>
      </div>
    </aside>

    <div class="w-[4px] shrink-0"></div>

    <!-- component list + layer panels -->
    <div class="w-[276px] shrink-0 flex flex-col">
      <section class="h-[420px] bg-white border-x border-b-2 border-[#c4c4c4] flex flex-col relative overflow-hidden">
        <div class="h-[12px] shrink-0 bg-[#d4d5da] flex items-center justify-end pr-[5px] text-[#777] text-[11px] leading-none">×</div>
        <div class="h-[24px] shrink-0 bg-[#f0f0f0] border-b border-[#c8c8c8] flex">
          <span class="w-[65px] flex items-center justify-center font-medium">构件列表</span>
          <span class="w-[65px] bg-[#e2e2e2] text-[#888] flex items-center justify-center">图纸管理</span>
        </div>
        <div class="h-[27px] shrink-0 bg-[#f0f0f0] border-b border-[#c8c8c8] flex items-center pl-[6px]">
          <svg class="w-[15px] h-[15px] mr-[4px]"><use href="#p-new"/></svg>新建<svg class="w-[6px] h-[3px] ml-[5px]"><use href="#caret"/></svg>
          <svg class="w-[15px] h-[15px] ml-[8px] mr-[4px]"><use href="#p-copy"/></svg>复制
          <svg class="w-[15px] h-[15px] ml-[8px] mr-[4px]"><use href="#p-del"/></svg>删除
          <svg class="w-[15px] h-[15px] ml-[8px] mr-[4px]"><use href="#p-fcopy"/></svg>层间复制
          <svg class="w-[7px] h-[5px] ml-auto mr-[2px]" viewBox="0 0 7 5"><path d="M0 0l3 2.500L0 5zM4 0l3 2.500L4 5z" fill="#333"/></svg>
        </div>
        <div class="h-[20px] shrink-0 border-b border-[#c8c8c8] flex items-center pl-[2px] text-[#999]">搜索构件...
          <svg class="w-[10px] h-[10px] ml-auto mr-[7px]" viewBox="0 0 10 10"><circle cx="4" cy="4" r="3" fill="none" stroke="#4a8fd8" stroke-width="1.300"/><path d="M6 6l3 3" stroke="#4a8fd8" stroke-width="1.500"/></svg>
        </div>
        <div class="pt-[3px]">
          <div class="h-6 flex items-center pl-[10px]"><svg class="w-[6px] h-[6px] mr-[7px]"><use href="#tri"/></svg>柱</div>
          <div class="h-6 flex items-center pl-[30px]"><svg class="w-[6px] h-[6px] mr-[7px]"><use href="#tri"/></svg>框架柱</div>
          <div class="h-6 flex items-center pl-[60px]"><span class="w-[43px] h-[21px] pl-[3px] bg-[#b7cfee] flex items-center">KZ1</span></div>
          <div class="h-6 flex items-center pl-[63px]">KZ3</div>
          <div class="h-6 flex items-center pl-[63px]">KZ4</div>
          <div class="h-6 flex items-center pl-[63px]">KZ6</div>
          <div class="h-6 flex items-center pl-[30px]"><svg class="w-[6px] h-[6px] mr-[7px]"><use href="#tri"/></svg>暗柱</div>
          <div class="h-6 flex items-center pl-[63px]">LZ1</div>
          <div class="h-6 flex items-center pl-[63px]">YBZ1</div>
          <div class="h-6 flex items-center pl-[63px]">YBZ1a</div>
          <div class="h-6 flex items-center pl-[63px]">YBZ2</div>
          <div class="h-6 flex items-center pl-[63px]">YBZ3</div>
          <div class="h-6 flex items-center pl-[63px]">YBZ4</div>
          <div class="h-6 flex items-center pl-[63px]">YBZ5</div>
        </div>
        <span class="absolute left-[264px] top-[99px] w-[7px] h-[160px] rounded-full bg-[#c8c8c8]"></span>
      </section>
      <div class="h-[5px] shrink-0"></div>
      <section class="flex-1 bg-white border-x border-b border-[#c4c4c4] flex flex-col">
        <div class="h-[12px] shrink-0 bg-[#d4d5da]"></div>
        <div class="h-[23px] shrink-0 bg-[#f0f0f0] border-b border-[#c8c8c8] flex">
          <span class="w-[65px] bg-[#e2e2e2] text-[#888] flex items-center justify-center">属性列表</span>
          <span class="w-[65px] flex items-center justify-center font-medium">图层管理</span>
        </div>
        <div class="h-[28px] shrink-0 bg-[#f0f0f0] border-b border-[#c8c8c8] flex items-center pl-[5px] gap-[8px] text-[#555]"><span>显示指定图层</span><span>隐藏指定图层</span></div>
        <div class="w-[238px] grid grid-cols-[50px_36px_1fr] border-b border-[#d5d5d5] ml-[1px]">
          <div class="h-[20px] bg-[#f0f0f0] border-r border-b border-[#cfcfcf] flex items-center justify-center">开 / 关</div>
          <div class="h-[20px] bg-[#f0f0f0] border-r border-b border-[#cfcfcf] flex items-center justify-center">颜色</div>
          <div class="h-[20px] bg-[#f0f0f0] border-r border-b border-[#cfcfcf] flex items-center justify-center">名称</div>
          <div class="h-[21px] border-r border-b border-[#e0e0e0] flex items-center justify-center"><span class="w-[14px] h-[14px] rounded-[2px] border border-[#888]"></span></div>
          <div class="h-[21px] border-r border-b border-[#e0e0e0] flex items-center justify-center"><svg class="w-[6px] h-[9px]" viewBox="0 0 6 9"><path d="M.5.500L5.500 4.500.5 8.500z" fill="none" stroke="#888"/></svg></div>
          <div class="h-[21px] border-r border-b border-[#e0e0e0] flex items-center pl-[4px]">已提取的 CAD 图层</div>
          <div class="h-[21px] border-r border-[#e0e0e0] flex items-center justify-center"><span class="w-[14px] h-[14px] rounded-[2px] border border-[#888]"></span></div>
          <div class="h-[21px] border-r border-[#e0e0e0] flex items-center justify-center"><svg class="w-[6px] h-[9px]" viewBox="0 0 6 9"><path d="M.5.500L5.500 4.500.5 8.500z" fill="none" stroke="#888"/></svg></div>
          <div class="h-[21px] border-r border-[#e0e0e0] flex items-center pl-[4px]">CAD 原始图层</div>
        </div>
      </section>
    </div>

    <div class="w-[4px] shrink-0"></div>

    <!-- 3D viewport -->
    <div class="relative w-[1142px] shrink-0 bg-black overflow-hidden">
      <svg id="cad" class="absolute inset-0 w-[1142px] h-[845px]" viewBox="487 165 1142 845"></svg>
      <div class="absolute right-0 top-0 w-[33px] h-[228px] bg-[#8b8e93] flex flex-col items-center pt-[5px]">
        <svg class="w-[26px] h-[28px]" viewBox="0 0 26 28"><circle cx="12" cy="15" r="10" fill="#b4b8bd" stroke="#444"/><ellipse cx="10" cy="12" rx="5" ry="4" fill="#dfe2e5"/><circle cx="19" cy="8" r="5" fill="#8f9297" stroke="#444"/><path d="M1 22c8 1 18-5 22-11" fill="none" stroke="#444"/></svg>
        <div class="w-[24px] h-[23px] mt-[8px] bg-[#74849b] border border-[#444] flex items-end justify-end pr-[1px] text-[7px] leading-none text-[#222]">2D</div>
        <svg class="w-[24px] h-[23px] mt-[6px]" viewBox="0 0 24 23"><path d="M1 6l5-5h17v16l-5 5H1z" fill="#cfe4fa" stroke="#333"/><path d="M1 6h17v16M18 6l5-5M6 1v16h17M6 17l-5 5" fill="none" stroke="#333"/></svg>
        <svg class="w-[7px] h-[4px] mt-[7px]"><use href="#caret"/></svg>
        <svg class="w-[24px] h-[23px] mt-[5px]" viewBox="0 0 24 23"><path d="M1 6l5-5h17v16l-5 5H1z" fill="#74849b" stroke="#333"/><path d="M1 6h17v16M18 6l5-5" fill="none" stroke="#333"/></svg>
        <svg class="w-[7px] h-[4px] mt-[6px]"><use href="#caret"/></svg>
        <svg class="w-[22px] h-[22px] mt-[6px]" viewBox="0 0 22 22"><path d="M19 8a9 9 0 1 0 1 5" fill="none" stroke="#333" stroke-width="2"/><path d="M21 1v8h-8z" fill="#333"/></svg>
        <svg class="w-[7px] h-[4px] mt-[6px]"><use href="#caret"/></svg>
        <span class="w-[24px] h-[1px] bg-[#555] mt-[5px]"></span>
        <svg class="w-[24px] h-[22px] mt-[5px]" viewBox="0 0 24 22"><rect x=".5" y=".5" width="23" height="21" rx="1" fill="#8fa0b5" stroke="#333"/><path d="M1 4h22M12 4v18" stroke="#333"/><path d="M3 8h2M3 12h2M3 16h2M7 8h3M7 12h3M7 16h3M15 8h2M15 12h2M15 16h2M19 8h3M19 12h3M19 16h3" stroke="#222"/></svg>
      </div>
    </div>

    <div class="w-[4px] shrink-0 relative"><span class="absolute left-0 top-[375px] w-[4px] h-[60px] bg-[#5b6066]"></span></div>

    <!-- display settings -->
    <aside class="flex-1 bg-white border-l border-[#c4c4c4] flex flex-col">
      <div class="h-[12px] shrink-0 bg-[#d4d5da]"></div>
      <div class="h-[22px] shrink-0 bg-[#f0f0f0] border-b border-[#c8c8c8] flex items-center pl-[8px] text-[#888]">显示设置</div>
      <div class="h-[29px] shrink-0 bg-[#f0f0f0] flex items-end pl-[2px] gap-[3px] border-b border-[#d0d0d0]">
        <span class="w-[76px] h-[24px] bg-white rounded-t-[3px] border border-b-0 border-[#d0d0d0] text-[#3d8ee8] flex items-center justify-center">图元显示</span>
        <span class="w-[74px] h-[23px] bg-[#dedede] rounded-t-[3px] text-[#666] flex items-center justify-center">楼层显示</span>
      </div>
      <div class="ml-[2px] mt-[3px] w-[259px] h-[739px] border-x border-b border-[#d5d5d5] overflow-hidden">
        <div class="grid grid-cols-[131px_63px_63px] h-[21px] bg-[#f5f5f5] border-y border-[#d5d5d5]">
          <span class="flex items-center justify-center border-r border-[#d5d5d5] text-[#444]">图层构件</span>
          <span class="flex items-center justify-center bg-[#6ab0f5] text-white border-r border-[#d5d5d5]">显示图元</span>
          <span class="flex items-center justify-center text-[#444]">显示名称</span>
        </div>
        <div id="layer-rows"></div>
      </div>
      <div class="flex justify-end mt-[7px]">
        <span class="w-[86px] h-[26px] bg-white border border-[#d0d0d0] rounded-l-[3px] flex items-center justify-center">恢复默认设置</span>
      </div>
    </aside>
  </main>

  <!-- status bar -->
  <footer class="h-[29px] shrink-0 bg-[#dcdde0] flex items-center text-[#333] whitespace-nowrap pt-[1px]">
    <span class="w-[258px] -ml-[3px] [word-spacing:3px]">X = -88027 Y = 12517 Z = 59535</span>
    <span class="w-[86px] pl-[3px]">层高： 2.9</span>
    <span class="w-[133px]">标高： 2.78~5.68</span>
    <span class="w-[103px]">0</span>
    <span class="w-[103px]">隐藏：0</span>
    <span class="w-[25px] h-[24px] bg-[#d0d1d4] border border-[#999] flex items-center justify-center"><svg class="w-[13px] h-[13px]" viewBox="0 0 13 13"><path d="M1 1v11h11M1 7h6v5" fill="none" stroke="#333"/></svg></span>
    <span class="ml-[3px] w-[35px] h-[24px] bg-white border border-[#3d8ee8] flex items-center pl-[4px] gap-[7px] relative"><span class="w-[13px] h-[14px] border border-[#4a8fd8]"></span><svg class="w-[6px] h-[3px]"><use href="#caret"/></svg><span class="absolute left-[3px] top-[3px] w-[5px] h-[5px] bg-[#f0a060] border border-[#d07020]"></span></span>
    <span class="ml-[7px] w-[25px] h-[24px] bg-[#d0d1d4] border border-[#aaa] flex items-center justify-center"><svg class="w-[14px] h-[14px]" viewBox="0 0 14 14"><path d="M0 0l14 14M14 0L0 14" stroke="#888"/></svg></span>
    <span class="ml-[6px] w-[35px] h-[24px] bg-[#d0d1d4] border border-[#999] flex items-center pl-[3px] gap-[5px]"><svg class="w-[15px] h-[13px]" viewBox="0 0 15 13"><path d="M1 12L11 2M1 12h14" stroke="#333" fill="none"/><rect x="5" y="8" width="2" height="2" fill="#333"/></svg><svg class="w-[6px] h-[3px]"><use href="#caret"/></svg></span>
    <span class="ml-[4px] w-[36px] h-[24px] bg-[#d0d1d4] border border-[#999] flex items-center pl-[3px] gap-[5px]"><svg class="w-[16px] h-[13px]" viewBox="0 0 16 13"><path d="M4 1v6M1 4h6" stroke="#333"/><rect x="7" y="8" width="9" height="4" fill="#333"/></svg><svg class="w-[6px] h-[3px]"><use href="#caret"/></svg></span>
    <span class="ml-[3px] w-[72px] h-[24px] bg-[#d0d1d4] border border-[#999] flex items-center justify-center">跨图层选择</span>
    <span class="ml-[4px] w-[61px] h-[24px] bg-[#d0d1d4] border border-[#999] flex items-center justify-center">折线选择</span>
    <span class="ml-[6px]">按鼠标左键指定第一个角点，或拾取构件图元</span>
    <span class="ml-auto">166.667 FPS</span>
  </footer>
  <div class="h-[4px] shrink-0 bg-gradient-to-b from-[#3a4654] to-[#5b6a78]"></div>

  <!-- batch select dialog -->
  <div class="absolute left-[472px] top-[274px] w-[419px] h-[510px] bg-[#efefef] border-l border-b border-[#c3cbdb] flex flex-col z-20">
    <div class="h-[27px] shrink-0 bg-[#2e80e2] text-white flex items-center pl-[8px] pr-[9px] justify-between">批量选择
      <svg class="w-[8px] h-[8px]" viewBox="0 0 8 8"><path d="M.5.500l7 7M7.500.500l-7 7" stroke="#fff" stroke-width="1.500"/></svg>
    </div>
    <div class="relative ml-[11px] mt-[11px] w-[394px] h-[387px] shrink-0 bg-white border border-[#b4b4b4] overflow-hidden">
      <div class="h-6 flex items-center pl-[10px]"><svg class="w-[6px] h-[6px] mr-[8px]"><use href="#tri"/></svg><span class="w-[14px] h-[14px] rounded-[2px] border border-[#888] mr-[7px]"></span>5#楼</div>
      <div class="h-6 flex items-center pl-[30px]"><svg class="w-[6px] h-[6px] mr-[8px]"><use href="#tri"/></svg><span class="w-[14px] h-[14px] rounded-[2px] border border-[#888] mr-[7px]"></span>第2层</div>
      <div class="h-6 flex items-center pl-[50px]"><svg class="w-[6px] h-[6px] mr-[8px]"><use href="#tri"/></svg><span class="w-[14px] h-[14px] rounded-[2px] border border-[#888] mr-[7px]"></span>柱</div>
      <div class="h-6 flex items-center pl-[70px]"><svg class="w-[6px] h-[6px] mr-[8px]"><use href="#tri"/></svg><span class="w-[14px] h-[14px] rounded-[2px] border border-[#888] mr-[7px]"></span>暗柱</div>
      <div class="h-6 flex items-center pl-[104px]"><span class="w-[14px] h-[14px] rounded-[2px] border border-[#888] mr-[7px]"></span>YBZ1</div>
      <div class="h-6 flex items-center pl-[104px]"><span class="w-[14px] h-[14px] rounded-[2px] border border-[#888] mr-[7px]"></span>YBZ2</div>
      <div class="h-6 flex items-center pl-[104px]"><span class="w-[14px] h-[14px] rounded-[2px] border border-[#888] mr-[7px]"></span>YBZ3</div>
      <div class="h-6 flex items-center pl-[104px]"><span class="w-[14px] h-[14px] rounded-[2px] border border-[#888] mr-[7px]"></span>YBZ4</div>
      <div class="h-6 flex items-center pl-[104px]"><span class="w-[14px] h-[14px] rounded-[2px] border border-[#888] mr-[7px]"></span>YBZ5</div>
      <div class="h-6 flex items-center pl-[104px]"><span class="w-[14px] h-[14px] rounded-[2px] border border-[#888] mr-[7px]"></span>YBZ6</div>
      <div class="h-6 flex items-center pl-[104px]"><span class="w-[14px] h-[14px] rounded-[2px] border border-[#888] mr-[7px]"></span>YBZ7</div>
      <div class="h-6 flex items-center pl-[104px]"><span class="w-[14px] h-[14px] rounded-[2px] border border-[#888] mr-[7px]"></span>YBZ8</div>
      <div class="h-6 flex items-center pl-[104px]"><span class="w-[14px] h-[14px] rounded-[2px] border border-[#888] mr-[7px]"></span>YBZ10</div>
      <div class="h-6 flex items-center pl-[104px]"><span class="w-[14px] h-[14px] rounded-[2px] border border-[#888] mr-[7px]"></span>YBZ11</div>
      <div class="h-6 flex items-center pl-[104px]"><span class="w-[14px] h-[14px] rounded-[2px] border border-[#888] mr-[7px]"></span>YBZ12</div>
      <div class="h-6 flex items-center pl-[104px]"><span class="w-[14px] h-[14px] rounded-[2px] border border-[#888] mr-[7px]"></span>YBZ13</div>
      <span class="absolute left-[381px] top-[14px] w-[8px] h-[286px] rounded-full bg-[#cbcbcb]"></span>
    </div>
    <div class="mt-[9px] mr-[13px] h-[20px] flex items-center justify-end">
      <span class="w-[14px] h-[14px] rounded-[2px] bg-[#5aa5f5] flex items-center justify-center mr-[3px]"><svg class="w-[9px] h-[7px]"><use href="#check"/></svg></span>当前楼层
      <span class="w-[14px] h-[14px] rounded-[2px] border border-[#888] bg-white ml-[8px] mr-[3px]"></span>当前构件类型
      <span class="w-[14px] h-[14px] rounded-[2px] bg-[#5aa5f5] flex items-center justify-center ml-[8px] mr-[3px]"><svg class="w-[9px] h-[7px]"><use href="#check"/></svg></span>显示构件
    </div>
    <div class="mt-[11px] ml-[11px] w-[394px] h-[1px] bg-[#c4c4c4]"></div>
    <div class="mt-[7px] mr-[13px] flex justify-end gap-[6px]">
      <span class="w-[80px] h-[26px] bg-[#2e80e2] text-white rounded-[3px] flex items-center justify-center">确定</span>
      <span class="w-[79px] h-[26px] bg-white border border-[#d0d0d0] rounded-[3px] flex items-center justify-center">取消</span>
    </div>
  </div>
</div>

<script>
// display settings rows
const layers = [[0,'所有构件'],[1,'轴线'],[2,'轴网'],[2,'辅助轴线'],[1,'柱'],[2,'柱'],[2,'构造柱'],[2,'砌体柱'],[1,'墙'],[2,'剪力墙'],[2,'人防门框墙'],[2,'砌体墙'],[2,'砌体加筋'],[2,'保温墙'],[2,'暗梁'],[2,'墙垛'],[2,'幕墙'],[1,'门窗洞'],[2,'门'],[2,'窗'],[2,'门联窗'],[2,'墙洞'],[2,'带形窗'],[2,'带形洞'],[2,'飘窗'],[2,'老虎窗'],[2,'过梁'],[2,'壁龛'],[1,'梁'],[2,'梁'],[2,'连梁'],[2,'圈梁'],[1,'板'],[2,'现浇板'],[2,'']];
const on = '<span class="w-[14px] h-[14px] rounded-[2px] bg-[#5aa5f5] flex items-center justify-center"><svg class="w-[9px] h-[7px]"><use href="#check"/></svg></span>';
const off = '<span class="w-[14px] h-[14px] rounded-[2px] border border-[#888]"></span>';
const dim = '<span class="w-[14px] h-[14px] rounded-[2px] border border-[#bbb] bg-[#eee]"></span>';
document.getElementById('layer-rows').innerHTML = layers.map(([lv, name], i) => {
  const next = layers[i + 1] ? layers[i + 1][0] : 1;
  const box = '<span class="w-[14px] h-[13px] rounded-[2px] border border-[#777] flex items-center justify-center bg-white relative"><span class="w-[6px] h-[1px] bg-[#333]"></span></span>';
  let head;
  if (lv === 0) head = '<span class="ml-[2px] mr-[5px] flex">' + box + '</span>';
  else if (lv === 1) head = '<span class="absolute left-[2px] top-[10px] w-[10px] h-[1px] bg-[#ddd]"></span><span class="ml-[12px] mr-[5px] flex">' + box + '</span>';
  else head = '<span class="absolute left-[18px] top-0 w-[1px] ' + (next === 2 ? 'h-[21px]' : 'h-[11px]') + ' bg-[#ddd]"></span><span class="absolute left-[18px] top-[10px] w-[16px] h-[1px] bg-[#ddd]"></span><span class="ml-[41px]"></span>';
  return '<div class="grid grid-cols-[131px_63px_63px] h-[21px] border-b border-[#d5d5d5]">'
    + '<div class="relative flex items-center border-r border-[#d5d5d5] overflow-hidden">' + head + name + '</div>'
    + '<div class="flex items-center justify-center border-r ' + (i === 0 ? 'border-2 border-[#808080]' : 'border-[#d5d5d5]') + '">' + on + '</div>'
    + '<div class="flex items-center justify-center">' + (i >= 1 && i <= 3 ? dim : off) + '</div></div>';
}).join('');

// CAD drawing in the viewport, page coordinates
const A = [908,683], B = [1157,597], D = [947,713];
const P = (u, v) => [A[0]+u*(B[0]-A[0])+v*(D[0]-A[0]), A[1]+u*(B[1]-A[1])+v*(D[1]-A[1])];
let s = '';
const seg = (a, b, c, w) => s += `<line x1="${a[0]}" y1="${a[1]}" x2="${b[0]}" y2="${b[1]}" stroke="${c}" stroke-width="${w}"/>`;
// green rings and numbers are placed from reference crop coordinates
const z = (x, y) => [880 + x/3, 550 + y/3];
const label = (x, y, t) => {
  const [px, py] = z(x, y);
  s += `<circle cx="${px}" cy="${py}" r="${t.length > 2 ? 13 : 12.5}" fill="none" stroke="#0a6a0a"/>`;
  s += `<text x="${px}" y="${py+6}" fill="#eee" font-family="Liberation Sans, sans-serif" font-size="17" text-anchor="middle">${t}</text>`;
};
const upper = '2 3 4 7 9 10 12 13 15 17 19 22 23 25 27 28 29 32 34 36 38 W5 2'.split(' ');
upper.forEach((t, i) => label(45 + i*(650/22), 335 - i*(225/22), t));
[[273,563,'1'],[320,545,'3'],[362,530,'5'],[400,520,'8'],[445,505,'11'],[495,490,'13'],[545,475,'5'],[588,460,'8'],[630,445,'1'],[665,430,'23'],[705,415,'25'],[750,405,'27'],[800,390,'30'],[840,375,'3'],[880,362,'35'],[925,340,'V5'],[965,330,'2'],[1030,305,'W5-3'],[765,90,'W5-3'],[915,108,'W5-D'],[960,148,'W5-C'],[1005,182,'W5-B'],[1050,222,'W5-A'],[55,470,'5'],[90,510,'B'],[130,525,'A'],[205,535,'0'],[35,440,'8']].forEach(l => label(...l));
// label bands of closely spaced dimension marks
const band = (a, b, n, len, c, w) => {
  for (let i = 0; i <= n; i++) {
    const t = i/n, x = a[0]+t*(b[0]-a[0]), y = a[1]+t*(b[1]-a[1]);
    seg([x-len*.3, y-len], [x+len*.3, y+len], c, w);
  }
};
const zeros = (x, y, deg, n, size) => {
  s += `<text transform="translate(${x} ${y}) rotate(${deg})" fill="#f4f4f4" font-family="Liberation Sans, sans-serif" font-size="${size}" textLength="${n}">${'0'.repeat(Math.round(n/(size*.45)))}</text>`;
};
zeros(893,680,-18.5,235,12);
zeros(897,674,-18.5,225,12);
zeros(1100,612,-11,85,13);
band([897,676],[1118,602],110,4,'#f4f4f4',1.4);
band([897,666],[1100,598],30,3,'#0a7a0a',1);
band([957,721],[1200,639],100,5,'#eee',1.1);
band([893,680],[945,724],22,5,'#eee',1.6);
// red structural grid
[0,.14,.3,.43,.55,.7,.86,1].forEach(v => seg(P(0,v), P(1,v), '#f00', 1.2));
[0,.07,.13,.2,.27,.33,.4,.47,.53,.6,.67,.74,.81,.88,.94,1].forEach(u => seg(P(u,0), P(u,1), '#f00', 1.2));
[.15,.33,.52,.68].forEach(u => { seg(P(u,.45), P(u+.08,.45), '#a00', 1); seg(P(u,.55), P(u+.08,.55), '#a00', 1); seg(P(u+.04,.3), P(u+.04,.6), '#a00', 1); });
seg([938,716],[957,706],'#fff',1.500); seg([938,704],[952,722],'#fff',1.500);
// axis gizmo
s += '<path d="M537 960L561 951" stroke="#f00" stroke-width="3"/><path d="M552 950l10 0-7 8z" fill="#f00"/>';
s += '<path d="M537 960L525 950" stroke="#0c0" stroke-width="4"/><path d="M521 947l6-1 2 6z" fill="#0a0"/>';
s += '<path d="M537 960V942" stroke="#00f" stroke-width="3"/><path d="M537 935l4 9h-8z" fill="#00f"/>';
s += '<rect x="533" y="957" width="8" height="8" fill="#999"/>';
s += '<text x="562" y="955" fill="#f00" font-family="Liberation Sans, sans-serif" font-size="13">X</text>';
s += '<text x="513" y="949" fill="#0d0" font-family="Liberation Sans, sans-serif" font-size="13">Y</text>';
s += '<text x="533" y="935" fill="#00f" font-family="Liberation Sans, sans-serif" font-size="13">Z</text>';
document.getElementById('cad').innerHTML = s;
</script>
</body>
</html>
